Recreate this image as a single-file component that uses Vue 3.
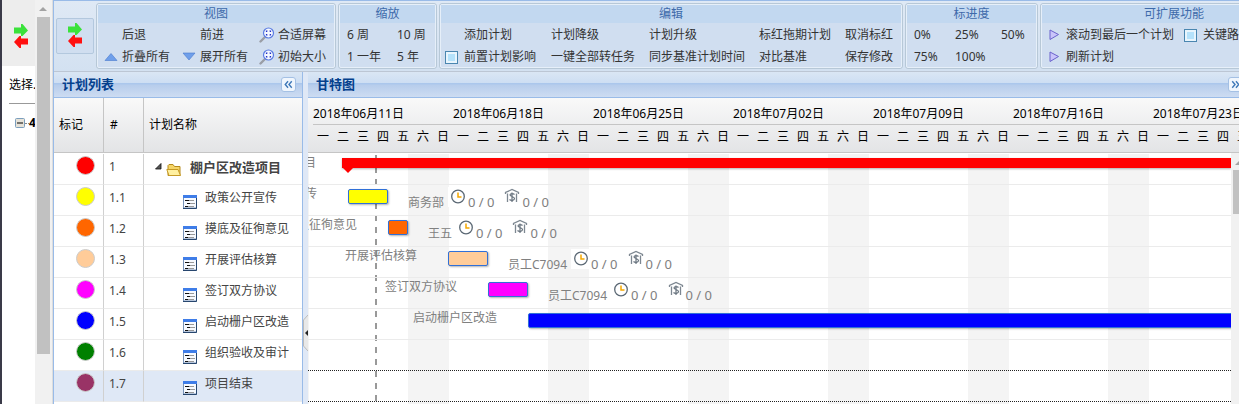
<script setup>
const groups = [
  {
    title: '视图', kind: 'view', items: [
      { t: '后退', icon: 'none' }, { t: '前进', icon: 'none' }, { t: '合适屏幕', icon: 'zoom' },
      { t: '折叠所有', icon: 'up' }, { t: '展开所有', icon: 'down' }, { t: '初始大小', icon: 'zoom' },
    ],
  },
  { title: '缩放', kind: 'scale', items: [{ t: '6 周' }, { t: '10 周' }, { t: '1 一年' }, { t: '5 年' }] },
  {
    title: '编辑', kind: 'edit', items: [
      { t: '添加计划', icon: 'none' }, { t: '计划降级' }, { t: '计划升级' }, { t: '标红拖期计划' }, { t: '取消标红' },
      { t: '前置计划影响', check: true }, { t: '一键全部转任务' }, { t: '同步基准计划时间' }, { t: '对比基准' }, { t: '保存修改' },
    ],
  },
  { title: '标进度', kind: 'progress', items: [{ t: '0%' }, { t: '25%' }, { t: '50%' }, { t: '75%' }, { t: '100%' }] },
  {
    title: '可扩展功能', kind: 'extra', items: [
      { t: '滚动到最后一个计划', icon: 'play' }, { t: '关键路径', check: true }, { t: '刷新计划', icon: 'play' },
    ],
  },
]

const tasks = [
  { no: '1', name: '棚户区改造项目', color: '#ff0000', start: 34, root: true },
  { no: '1.1', name: '政策公开宣传', color: '#ffff00', start: 40, days: 2, who: '商务部' },
  { no: '1.2', name: '摸底及征徇意见', color: '#ff6600', start: 80, days: 1, who: '王五' },
  { no: '1.3', name: '开展评估核算', color: '#ffcc99', start: 140, days: 2, who: '员工C7094' },
  { no: '1.4', name: '签订双方协议', color: '#ff00ff', start: 180, days: 2, who: '员工C7094' },
  { no: '1.5', name: '启动栅户区改造', color: '#0000ff', start: 220, days: 60 },
  { no: '1.6', name: '组织验收及审计', color: '#008000' },
  { no: '1.7', name: '项目结束', color: '#993366', selected: true },
]

const weeks = ['2018年06月11日', '2018年06月18日', '2018年06月25日', '2018年07月02日', '2018年07月09日', '2018年07月16日', '2018年07月23日']
const days = ['一', '二', '三', '四', '五', '六', '日']
const DAY = 20
const labelEnd = (t) => t.start - (t.root ? 26 : 31)
</script>

<template>
  <div class="app">
    <aside class="side">
      <div class="side-body">
        <div class="side-top">
          <svg class="swap" viewBox="0 0 14 24"><path d="M0 3.500h7V0h1.500L14 6.500 8.500 12H7V9.500H0z" fill="#3be23b" /><path d="M14 14.500H7V12H5.500L0 18l5.500 6H7v-3.500h7z" fill="#ff1010" /></svg>
        </div>
        <div class="side-text">选择.</div>
        <div class="side-tree">
          <svg width="10" height="10" viewBox="0 0 10 10"><rect x=".5" y=".5" width="9" height="9" rx="1" fill="#e6e2d8" stroke="#7b9ebd" /><path d="M2 5h6" stroke="#000" /></svg>
          <i></i><b>4</b>
        </div>
      </div>
      <div class="scroll side-scroll"><span class="arrow-up"></span><span class="thumb"></span></div>
    </aside>

    <main class="main">
      <div class="toolbar">
        <button class="swap-btn" type="button" aria-label="切换">
          <svg class="swap" viewBox="0 0 14 24"><path d="M0 3.500h7V0h1.500L14 6.500 8.500 12H7V9.500H0z" fill="#3be23b" /><path d="M14 14.500H7V12H5.500L0 18l5.500 6H7v-3.500h7z" fill="#ff1010" /></svg>
        </button>
        <section v-for="g in groups" :key="g.title" class="group" :class="g.kind">
          <div class="group-in">
            <h2>{{ g.title }}</h2>
            <div class="items">
              <template v-for="it in g.items" :key="it.t">
                <label v-if="it.check" class="tool"><input type="checkbox" /><span>{{ it.t }}</span></label>
                <button v-else type="button" class="tool">
                  <svg v-if="it.icon" class="ico" viewBox="0 0 16 16">
                    <path v-if="it.icon === 'up'" d="M8 4.500 14 11.500H2z" fill="#6f9fea" stroke="#4878cc" stroke-width=".6" />
                    <path v-if="it.icon === 'down'" d="M8 11 14 4H2z" fill="#6f9fea" stroke="#4878cc" stroke-width=".6" />
                    <path v-if="it.icon === 'play'" d="M3 3 11.500 7.500 3 12.500z" fill="#c9c4fa" stroke="#6a62cc" />
                    <g v-if="it.icon === 'zoom'">
                      <path d="M6 10 1.500 14.500" stroke="#9a9ea6" stroke-width="2.400" stroke-linecap="round" />
                      <circle cx="9.500" cy="6" r="5" fill="#f4f8ff" stroke="#5b7ce2" stroke-width="1.200" />
                      <path d="M7.500 5V4h1M10.500 4h1v1M11.500 7v1h-1M8.500 8h-1V7" fill="none" stroke="#2230c8" stroke-width="1.200" />
                    </g>
                  </svg>
                  <span>{{ it.t }}</span>
                </button>
              </template>
            </div>
          </div>
        </section>
      </div>

      <div class="panels">
        <section class="list">
          <header class="title">
            <h1>计划列表</h1>
            <button type="button" class="tool-btn" aria-label="收起"><svg viewBox="0 0 14 14"><path d="M6.500 3.500 3.500 7l3 3.500M10.500 3.500 7.500 7l3 3.500" /></svg></button>
          </header>
          <table>
            <thead><tr><th class="c1">标记</th><th class="c2">#</th><th>计划名称</th></tr></thead>
            <tbody>
              <tr v-for="t in tasks" :key="t.no" :class="{ selected: t.selected, root: t.root }">
                <td class="c1"><span class="dot" :style="{ background: t.color }"></span></td>
                <td class="c2">{{ t.no }}</td>
                <td>
                  <div class="name">
                    <template v-if="t.root">
                      <svg class="caret" viewBox="0 0 7 7"><path d="M6 .5V6H.5z" fill="#555" stroke="#111" stroke-width=".8" /></svg>
                      <svg class="node" viewBox="0 0 16 14"><path d="M2 12.500V2.500l1-1h4l1.500 2H14v9z" fill="#f5d568" stroke="#b58a1c" /><path d="M.8 6.500H12l2.500 6H3z" fill="#fff0a0" stroke="#c69a25" /></svg>
                    </template>
                    <svg v-else class="node" viewBox="0 0 14 14"><rect x=".5" y=".5" width="13" height="12.500" fill="#f7faff" stroke="#7792b8" /><path d="M0 1.500h14" stroke="#3f7de8" stroke-width="3" /><path d="M13.500 3v10.500H0" stroke="#27466e" fill="none" /><path d="M2 5.500h4M4 8.500h3M2 11.500h3" stroke="#111" /><path d="M6 5.500h5M7 8.500h5M5 11.500h6" stroke="#999" /></svg>
                    <span>{{ t.name }}</span>
                  </div>
                </td>
              </tr>
            </tbody>
          </table>
        </section>

        <div class="splitter"><button type="button" aria-label="折叠"><svg viewBox="0 0 5 36"><path d="M5 0 .5 5v26L5 36" fill="#e8e8e8" stroke="#bbb" /><path d="M5 15v6l-3-3z" fill="#222" /></svg></button></div>

        <section class="gantt">
          <header class="title">
            <h1>甘特图</h1>
            <button type="button" class="tool-btn" aria-label="展开"><svg viewBox="0 0 14 14"><path d="M3.500 3.500 6.500 7l-3 3.500M7.500 3.500 10.500 7l-3 3.500" /></svg></button>
          </header>
          <div class="scale-head">
            <div class="weeks">
              <div v-for="w in weeks" :key="w" class="week">
                <div class="date">{{ w }}</div>
                <div class="days"><span v-for="d in days" :key="d">{{ d }}</span></div>
              </div>
            </div>
          </div>
          <div class="chart-wrap">
            <div class="chart">
              <div class="weekends"></div>
              <div class="today"></div>
              <div v-for="t in tasks" :key="t.no" class="lane" :class="{ marked: t.no === '1.6' || t.no === '1.7' }">
                <template v-if="t.start">
                  <span class="before" :style="{ right: `calc(100% - ${labelEnd(t)}px)` }">{{ t.name }}</span>
                  <div v-if="t.root" class="summary" :style="{ left: t.start + 'px' }"></div>
                  <div v-else class="bar" :style="{ left: t.start + 'px', width: t.days * DAY + 'px', background: t.color }"></div>
                  <div v-if="t.who" class="after" :style="{ left: t.start + t.days * DAY + 20 + 'px' }">
                    <span>{{ t.who }}</span>
                    <svg class="clock" viewBox="0 0 20 20"><circle cx="10" cy="9.500" r="6.300" fill="#fff" stroke="#5b6874" stroke-width="1.300" /><path d="M10 5.500v4.500h3.500" fill="none" stroke="#f5a800" stroke-width="1.500" /></svg>
                    <em>0 / 0</em>
                    <svg class="house" viewBox="0 0 20 20"><path d="M3.500 7V5.500L10 2.500l6.500 3V7M5.500 6.500V15M14.500 6.500V15" fill="none" stroke="#7d8791" stroke-width="1.300" /><path d="M12.500 7.500C11 6 8 6.500 8 8s4.500 1.500 4.500 3.500S9 14 7.500 12.500M10 5.500V15" fill="none" stroke="#69747f" stroke-width="1.200" /></svg>
                    <em>0 / 0</em>
                  </div>
                </template>
              </div>
            </div>
            <div class="scroll chart-scroll"><span class="arrow-up"></span><span class="thumb"></span></div>
          </div>
        </section>
      </div>
    </main>
  </div>
</template>

<style>
html, body, #app { height: 100%; }
body { margin: 0; overflow: hidden; background: #fff; }
</style>

<style scoped>
* { box-sizing: border-box; }
.app { display: flex; height: 100%; overflow: hidden; font: 12px/16px "Noto Sans", "Noto Sans CJK SC", sans-serif; color: #000; }
button { font: inherit; color: inherit; padding: 0; margin: 0; border: 0; background: none; }
h1, h2 { margin: 0; font-size: 12px; }
svg { display: block; flex: none; }
.swap { width: 14px; height: 24px; }

.side { display: flex; width: 53px; flex: none; border-left: 2px solid #3a3a48; }
.side-body { flex: 1; overflow: hidden; }
.side-top { height: 66px; background: #ededed; padding: 24px 0 0 12px; }
.side-text { margin-left: 7px; padding: 10px 0; border-bottom: 1px solid #999; white-space: nowrap; line-height: 17px; }
.side-tree { display: flex; align-items: center; padding: 11px 0 0 13px; }
.side-tree i { width: 4px; flex: none; border-top: 1px dotted #888; }
.scroll { display: flex; flex-direction: column; align-items: center; background: #f1f1f1; flex: none; }
.side-scroll { width: 18px; padding: 7px 3px 0 2px; border-right: 1px solid #ddd; }
.arrow-up { border: 4px solid transparent; border-top: 0; border-bottom-color: #a3a3a3; flex: none; }
.side-scroll .thumb { width: 13px; height: 85%; margin-top: 6px; background: #c1c1c1; }

.main { flex: 1; min-width: 0; display: flex; flex-direction: column; border-left: 1px solid #99bbe8; }
.toolbar { display: flex; flex: none; gap: 2px; height: 72px; padding: 2px 0 2px 2px; overflow: hidden; border-top: 1px solid #99bbe8; border-bottom: 1px solid #bcc6d4; background: linear-gradient(#dfe9f5, #d3e1f1); }
.swap-btn { width: 38px; height: 36px; margin: 15px 0 0; display: grid; place-items: center; border: 1px solid #b3c8de; border-radius: 2px; background: #d0def0; flex: none; }
.swap-btn .swap { margin-bottom: 2px; }
.group { flex: none; border: 1px solid #b7c8d7; border-radius: 3px; background: #d0def0; }
.group-in { height: 100%; border: 1px solid #e6eff9; border-radius: 2px; }
.group h2 { height: 18px; line-height: 18px; font-weight: 400; text-align: center; color: #3e6aaa; background: #c2d8f0; }
.items { display: grid; grid-auto-rows: 22px; padding-top: 1px; }
.tool { display: flex; align-items: center; gap: 3px; color: #333; white-space: nowrap; }
.ico { width: 16px; height: 16px; }
.tool input { appearance: none; width: 13px; height: 13px; margin: 0 3px 0 0; border: 1px solid #4a86b0; background: #b5e2fb; box-shadow: inset 0 0 0 2px #e8f5fd; }
.view { width: 240px; }
.view .items { grid-template-columns: 78px 78px auto; padding-left: 5px; }
.scale { width: 99px; }
.scale .items { grid-template-columns: 50px auto; padding-left: 7px; }
.edit { width: 464px; }
.edit .items { grid-template-columns: 106px 98px 110px 86px auto; padding-left: 4px; }
.progress { width: 133px; }
.progress .items { grid-template-columns: 41px 46px auto; padding-left: 7px; }
.extra { width: 268px; }
.extra .items { grid-template-columns: 137px auto; padding-left: 5px; }

.panels { flex: 1; min-height: 0; display: flex; }
.list { width: 249px; flex: none; border-right: 1px solid #99bbe8; overflow: hidden; }
.title { display: flex; align-items: center; justify-content: space-between; height: 26px; padding: 0 6px 0 8px; border-bottom: 1px solid #99bbe8; background: linear-gradient(#dae6f4, #cddef3 11px, #abc7ec 11px, #abc7ec 12px, #b7cdec 13px, #cddcf2); }
h1 { font-size: 13px; line-height: 18px; padding-bottom: 2px; color: #04408c; }
.tool-btn { width: 15px; height: 15px; border: 1px solid #a4c0e4; border-radius: 3px; background: #f0f6fd; flex: none; }
.tool-btn path { fill: none; stroke: #3e78b8; stroke-width: 1.500; }
table { width: 100%; table-layout: fixed; border-collapse: separate; border-spacing: 0; }
th { height: 55px; padding: 0 5px; font-weight: 400; text-align: left; border-bottom: 1px solid #c5c5c5; border-right: 1px solid #c5c5c5; background: linear-gradient(#f9f9f9, #e3e4e6); }
th:last-child, td:last-child { border-right: 0; }
.c1 { width: 50px; }
.c2 { width: 40px; }
th.c2 { padding-left: 6px; }
tbody::before { content: ""; display: block; height: 1px; }
td { height: 31px; padding: 0 5px; color: #444; border-bottom: 1px solid #ebebeb; border-right: 1px solid #d0d0d0; }
td:first-child { padding: 0; }
td.c2 { padding: 0 5px 4px; }
.selected td { background: #dfe8f6; }
.dot { display: block; width: 19px; height: 19px; margin: 0 0 8px 22px; border: 1px solid #ccc; border-radius: 50%; }
.name { display: flex; align-items: center; height: 30px; gap: 8px; padding-left: 34px; white-space: nowrap; }
.name span { padding-bottom: 4px; }
.name .node { width: 14px; height: 14px; margin-top: 3px; }
.root .name { gap: 4px; padding-left: 6px; font-size: 13px; font-weight: 700; }
.root .caret { width: 7px; height: 7px; margin-bottom: 6px; }
.root .node { width: 16px; margin-right: 4px; margin-top: 2px; }

.splitter { width: 5px; flex: none; display: flex; align-items: center; background: #dfe8f6; padding-top: 190px; }
.splitter button, .splitter svg { width: 5px; height: 36px; }
.gantt { flex: 1; min-width: 0; display: flex; flex-direction: column; overflow: hidden; }
.gantt .title { padding-right: 0; flex: none; }
.gantt .tool-btn { margin-right: -4px; }
.scale-head { height: 55px; flex: none; overflow: hidden; padding-left: 5px; border-bottom: 1px solid #c5c5c5; background: linear-gradient(#f9f9f9, #e3e4e6); }
.weeks { display: flex; }
.week { width: 140px; flex: none; }
.date { height: 27px; line-height: 32px; border-bottom: 1px solid #c5c5c5; }
.days { display: flex; line-height: 24px; }
.days span { width: 20px; text-align: center; }
.chart-wrap { flex: 1; min-height: 0; display: flex; }
.chart { position: relative; flex: 1; min-width: 0; overflow: hidden; padding-top: 1px; }
.weekends { position: absolute; inset: 1px 0 0; background: repeating-linear-gradient(90deg, #f4f4f4 0 1px, transparent 1px 100px, #f4f4f4 100px 140px); }
.today { position: absolute; left: 67px; top: 2px; bottom: 0; width: 2px; background: repeating-linear-gradient(#999 0 6px, transparent 6px 12px); }
.lane { position: relative; height: 31px; border-bottom: 1px solid #ebebeb; }
.lane.marked { border-bottom: 1px dotted #222; }
.before { position: absolute; top: 1px; color: #808080; white-space: nowrap; }
.bar { position: absolute; top: 4px; height: 15px; border: 1px solid #3070d8; border-radius: 2px; box-shadow: 1px 1px 2px rgba(0, 0, 0, .3); }
.summary { position: absolute; top: 4px; right: 0; height: 10px; background: #f00; box-shadow: 0 1px 2px rgba(0, 0, 0, .3); }
.summary::after { content: ""; position: absolute; left: 1px; top: 10px; border: 5px solid transparent; border-bottom: 0; border-top-color: #f00; }
.after { position: absolute; top: 2px; display: flex; color: #808080; white-space: nowrap; }
.after span, .after em { padding-top: 8px; font-style: normal; }
.after em { font-size: 13px; padding-top: 7px; }
.after svg { width: 20px; height: 20px; }
.clock { margin-left: 4px; background: #fff; }
.house { margin-left: 8px; }
.chart-scroll { width: 8px; overflow: hidden; align-items: flex-start; padding: 8px 0 0 2px; }
.chart-scroll .arrow-up { margin-left: 2px; }
.chart-scroll .thumb { width: 13px; height: 44px; margin-top: 5px; background: #c1c1c1; }
</style>
